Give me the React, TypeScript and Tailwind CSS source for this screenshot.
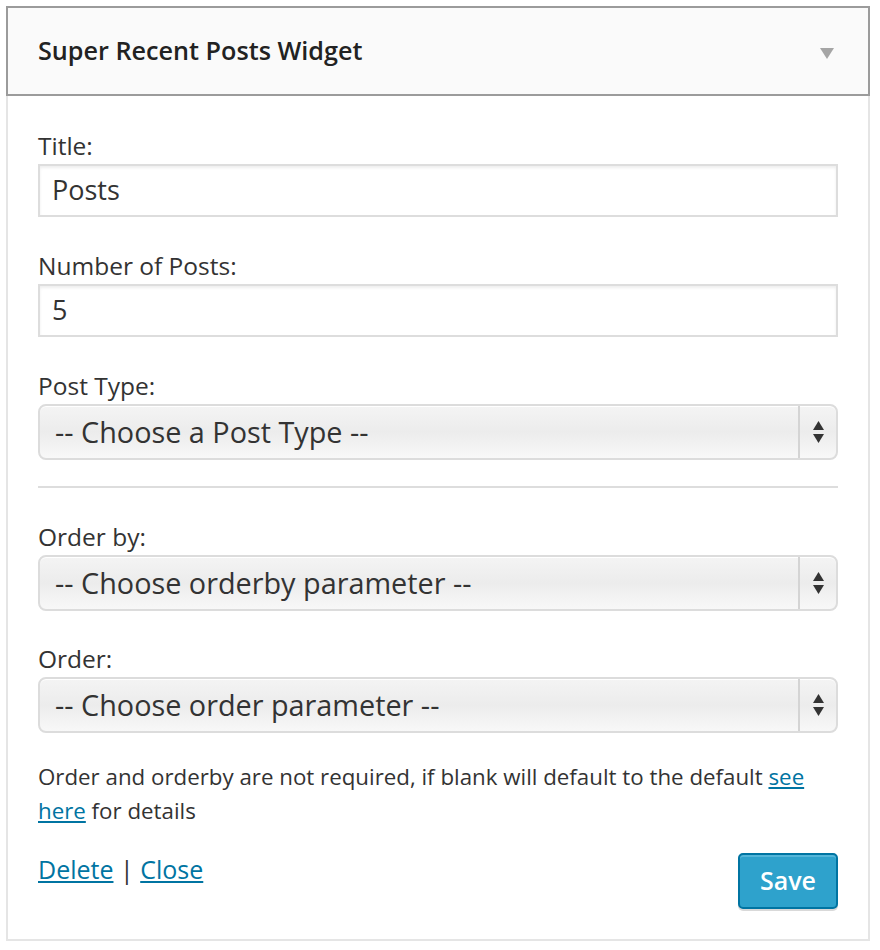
import React from "react";

function Select({ text }: { text: string }) {
  return (
    <div className="relative h-[56px] w-full rounded-[8px] border-2 border-[#dcdcdc] bg-gradient-to-b from-[#f4f4f4] via-[#ececec] to-[#f8f8f8] shadow-[inset_0_1px_0_#fff] flex items-center">
      <span className="pl-[15px] text-[28.8px] text-[#333] leading-none flex-1">{text}</span>
      <div className="h-full w-[38px] border-l-2 border-[#d4d4d4] flex flex-col items-center justify-center gap-[4px]">
        <svg width="11" height="9" viewBox="0 0 11 9"><path d="M5.5 0 L11 9 L0 9 Z" fill="#333" /></svg>
        <svg width="11" height="9" viewBox="0 0 11 9"><path d="M0 0 L11 0 L5.5 9 Z" fill="#333" /></svg>
      </div>
    </div>
  );
}

function Input({ value }: { value: string }) {
  return (
    <div className="h-[53px] w-full border-2 border-[#dddddd] bg-white shadow-[inset_0_2px_3px_rgba(0,0,0,0.07)] flex items-center pl-[12px] text-[27px] text-[#333]">
      {value}
    </div>
  );
}

function Label({ children }: { children: React.ReactNode }) {
  return <div className="h-[30px] leading-[30px] text-[24.5px] text-[#333] mb-[3px]">{children}</div>;
}

export default function App() {
  return (
    <div className="bg-white w-[880px] h-[950px] pt-[6px] pl-[6px] font-['Open_Sans',sans-serif]">
      <div className="w-[864px]">
        <div className="h-[90px] border-2 border-[#9b9b9b] bg-[#fafafa] flex items-center justify-between pl-[30px] pr-[34px]">
          <span className="text-[25.2px] font-semibold text-[#222]">Super Recent Posts Widget</span>
          <svg width="14" height="11" viewBox="0 0 14 11" className="mt-[4px]"><path d="M0 0 L14 0 L7 11 Z" fill="#a5a5a5" /></svg>
        </div>
        <div className="border-2 border-t-0 border-[#e5e5e5] px-[30px] pt-[35px] pb-[30px]">
          <Label>Title:</Label>
          <Input value="Posts" />
          <div className="h-[34px]" />
          <Label>Number of Posts:</Label>
          <Input value="5" />
          <div className="h-[34px]" />
          <Label>Post Type:</Label>
          <Select text="-- Choose a Post Type --" />
          <div className="h-[26px]" />
          <div className="h-[2px] bg-[#dddddd]" />
          <div className="h-[34px]" />
          <Label>Order by:</Label>
          <Select text="-- Choose orderby parameter --" />
          <div className="h-[33px]" />
          <Label>Order:</Label>
          <Select text="-- Choose order parameter --" />
          <div className="h-[27px]" />
          <p className="text-[22.3px] leading-[34px] text-[#333]">
            Order and orderby are not required, if blank will default to the default{" "}
            <a className="text-[#0074a2] underline">see here</a> for details
          </p>
          <div className="mt-[25px] flex items-start justify-between">
            <div className="text-[25px] text-[#333] leading-[34px] mt-[-1px]">
              <a className="text-[#0074a2] underline">Delete</a> | <a className="text-[#0074a2] underline">Close</a>
            </div>
            <button className="h-[56px] w-[100px] rounded-[5px] border-2 border-[#0074a2] bg-[#2ea2cc] text-white text-[25px] font-semibold shadow-[inset_0_2px_0_rgba(120,200,230,0.5),0_2px_0_rgba(0,0,0,0.15)]">
              Save
            </button>
          </div>
        </div>
      </div>
    </div>
  );
}
